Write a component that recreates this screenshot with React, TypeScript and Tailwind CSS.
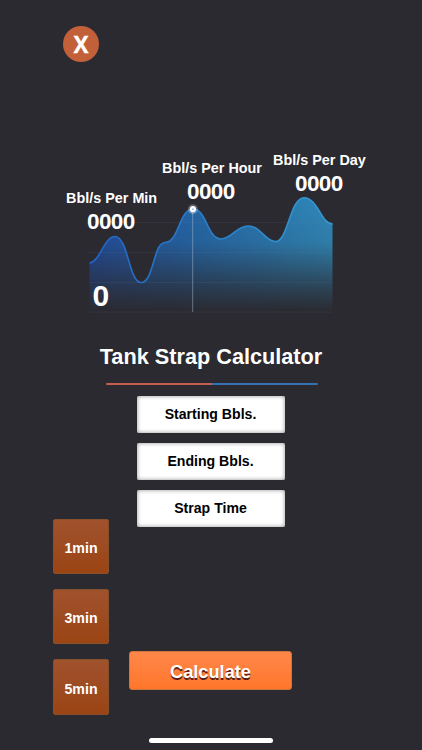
import React from "react";

const CURVE =
  "M0.5 66C11 65 15 39.5 26 39.5C39 39.5 40 85.5 52 85.5C65 85.5 64 46 76 45.5C90 45.5 90 12 104 12C118 12 118 42 132 42C143 42 147 29 159 29C172 29 176 44.5 186.5 44.5C199 44.5 201 0.8 215 0.8C229 0.8 232 27 243.5 27";

const fields = ["Starting Bbls.", "Ending Bbls.", "Strap Time"];
const times = ["1min", "3min", "5min"];

const rates = [
  { label: "Bbl/s Per Min", place: "left-[-23px] top-[-8px]", value: "-mt-px pl-[21px]" },
  { label: "Bbl/s Per Hour", place: "left-[73px] top-[-38px]", value: "-mt-px pl-[25px]" },
  { label: "Bbl/s Per Day", place: "left-[184px] top-[-46px]", value: "-mt-px pl-[22px]" },
];

const Chart = (): React.ReactElement => {
  return (
    <div className="relative mt-[135px] ml-[89px] h-[117px] w-[245px] shrink-0">
      <svg width="245" height="117" viewBox="0 0 245 117" className="block overflow-visible">
        <defs>
          <linearGradient id="hue" x1="0" x2="1" y1="0" y2="0">
            <stop offset="0" stopColor="#214fa6" />
            <stop offset="0.45" stopColor="#246cb0" />
            <stop offset="1" stopColor="#308fc2" />
          </linearGradient>
          <linearGradient id="line" x1="0" x2="1" y1="0" y2="0">
            <stop offset="0" stopColor="#2163c3" />
            <stop offset="1" stopColor="#349bd2" />
          </linearGradient>
          <linearGradient id="fade" gradientUnits="userSpaceOnUse" x1="0" x2="0" y1="0" y2="115">
            <stop offset="0" stopColor="#fff" stopOpacity="0.95" />
            <stop offset="0.4" stopColor="#fff" stopOpacity="0.82" />
            <stop offset="0.75" stopColor="#fff" stopOpacity="0.32" />
            <stop offset="1" stopColor="#fff" stopOpacity="0" />
          </linearGradient>
          <mask id="fadeMask" maskUnits="userSpaceOnUse" x="0" y="0" width="245" height="117">
            <rect width="245" height="117" fill="url(#fade)" />
          </mask>
        </defs>
        <path d={`${CURVE}V115H0.5Z`} fill="url(#hue)" mask="url(#fadeMask)" />
        {/* grid lines */}
        <path d="M0 25.5H243M0 55.5H243M0 85.5H243M0 115H243" stroke="#6484a4" strokeOpacity="0.12" />
        <path d={CURVE} fill="none" stroke="url(#line)" strokeWidth="1.6" />
        {/* selected point */}
        <path d="M103.7 12V115" stroke="#a9b9ce" strokeOpacity="0.5" />
        <circle cx="103.9" cy="12.2" r="5" fill="#fff" fillOpacity="0.25" />
        <circle cx="103.9" cy="12.2" r="3.1" fill="#fff" />
        <circle cx="103.9" cy="12.2" r="1" fill="#9cc8ec" />
      </svg>

      {rates.map((r) => (
        <div key={r.label} className={`absolute whitespace-nowrap ${r.place}`}>
          <p className="text-[14.4px] leading-[18px]">{r.label}</p>
          <p className={`text-[22.5px] leading-[32px] tracking-[-0.6px] ${r.value}`}>0000</p>
        </div>
      ))}
      <span className="absolute top-[83px] left-[3.5px] text-[30px] leading-[32px]">0</span>
    </div>
  );
};

const App = (): React.ReactElement => {
  return (
    <main className="flex h-[750px] w-[422px] flex-col overflow-hidden bg-[#2b2a30] font-['Liberation_Sans',Arial,sans-serif] font-bold text-white">
      <button className="mt-[26px] ml-[63px] flex size-[36px] shrink-0 items-center justify-center rounded-full bg-[#c2603a] pt-[2px] font-['Open_Sans',sans-serif] text-[22.5px] leading-none [-webkit-text-stroke:0.3px_white]">
        X
      </button>

      <Chart />

      <h1 className="mt-[29px] text-center text-[21.7px] leading-[28px] whitespace-nowrap">
        Tank Strap Calculator
      </h1>
      <div className="mt-[12px] ml-[106px] flex h-[2px] w-[212px] shrink-0">
        <span className="flex-1 rounded-l-full bg-[#c75c50]" />
        <span className="flex-1 rounded-r-full bg-[#3572b3]" />
      </div>

      <div className="mt-[11px] ml-[53px] flex gap-[20px]">
        <div className="flex w-[56px] flex-col gap-[15px] pt-[122.5px]">
          {times.map((t) => (
            <button
              key={t}
              className="h-[55.4px] rounded-[2px] border border-[#87502c] bg-linear-to-b from-[#a0522d] to-[#9b4413] pt-[5px] text-[14.2px]"
            >
              {t}
            </button>
          ))}
        </div>

        <div className="flex w-[163px] flex-col items-center">
          <div className="flex flex-col gap-[10px]">
            {fields.map((f) => (
              <button
                key={f}
                className="h-[37px] w-[148px] rounded-[2px] bg-white pt-px text-[14.1px] text-black shadow-[inset_0_0_4px_0_#8f8f8f]"
              >
                {f}
              </button>
            ))}
          </div>
          <button className="mt-[124px] h-[39px] w-full rounded-[3px] border border-[#cf743c] bg-linear-to-b from-[#ff8748] to-[#ff762b] pt-[5px] text-[18.2px] [text-shadow:0_2px_0_#5e1f16]">
            Calculate
          </button>
        </div>
      </div>

      <div className="mt-auto mb-[7px] ml-[149px] h-[5px] w-[124px] shrink-0 rounded-full bg-white" />
    </main>
  );
};

export default App;
